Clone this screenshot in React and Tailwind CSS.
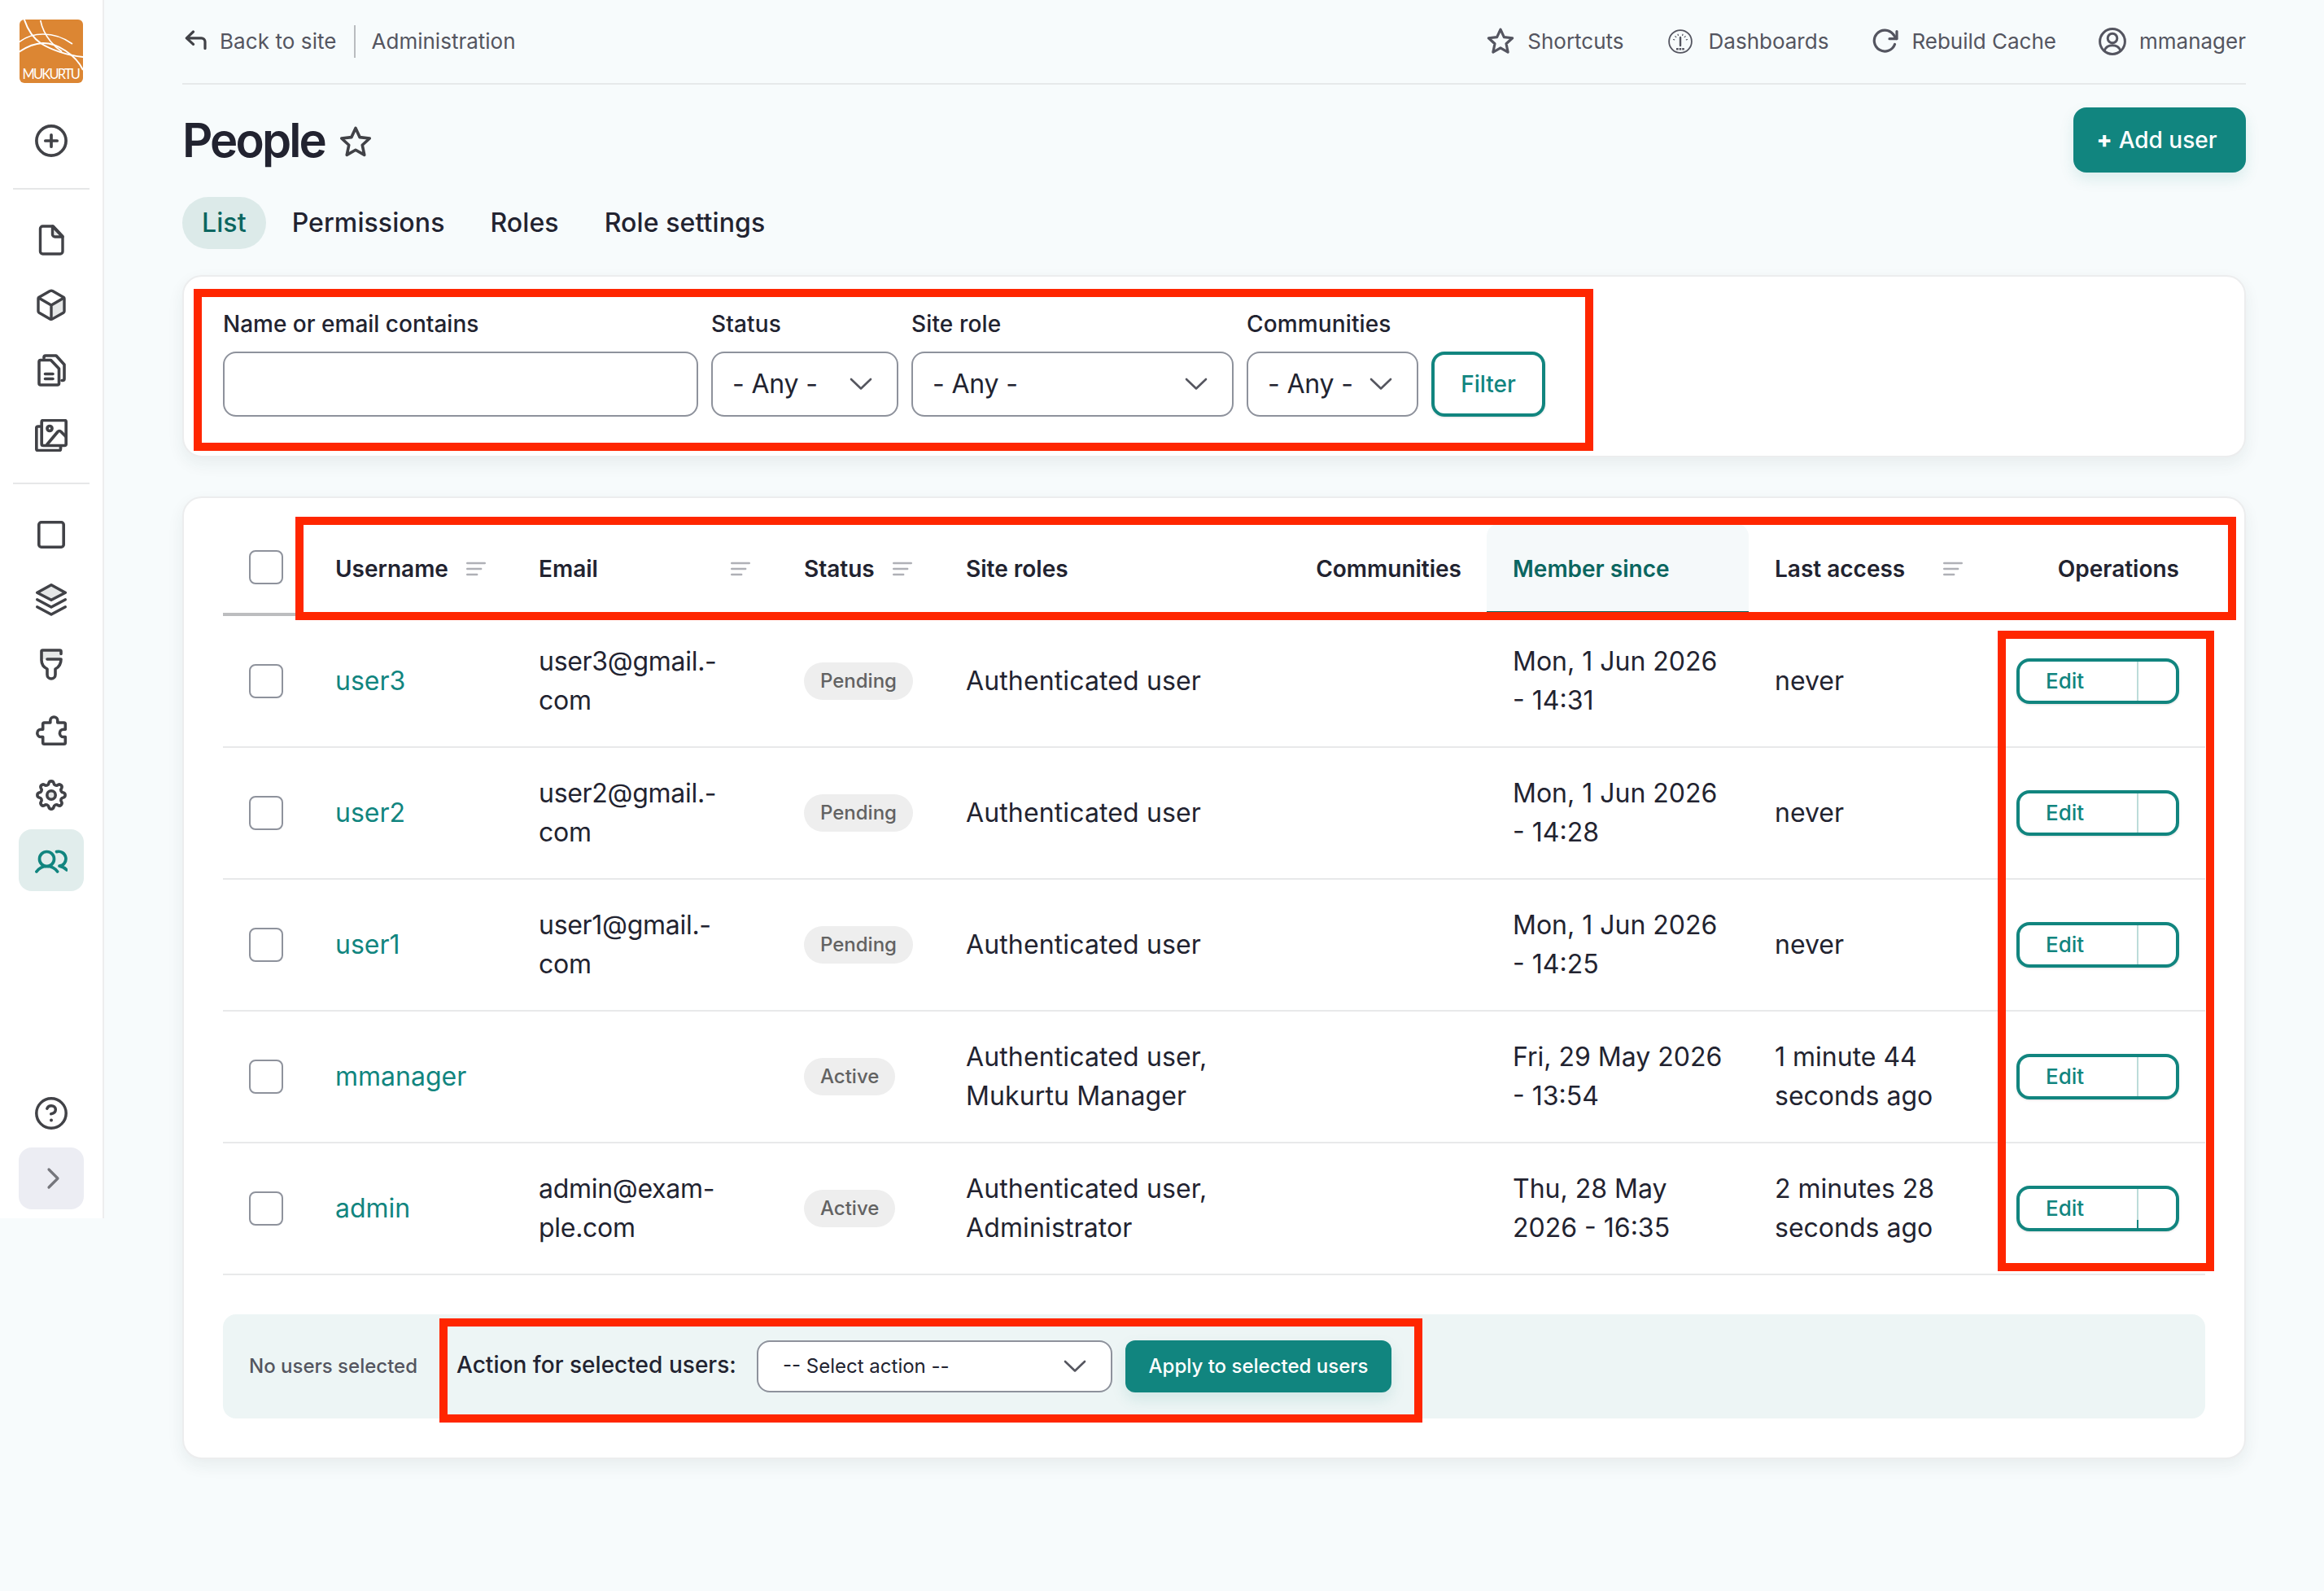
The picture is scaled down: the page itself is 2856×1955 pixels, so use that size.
import { useState } from "react";

// Shared wrapper for the 40px line icons
const Icon = ({ children, className = "", size = 40, box = 40, sw = 3.7 }) => (
  <svg
    width={size}
    height={size}
    viewBox={`0 0 ${box} ${box}`}
    fill="none"
    stroke="currentColor"
    strokeWidth={sw}
    strokeLinecap="round"
    strokeLinejoin="round"
    className={`shrink-0 ${className}`}
  >
    {children}
  </svg>
);

// Eight round lobes around the centre
const gearPath = () => {
  const pt = (deg) => {
    const a = (deg * Math.PI) / 180;
    return `${(20 + 15.2 * Math.sin(a)).toFixed(2)} ${(20 - 15.2 * Math.cos(a)).toFixed(2)}`;
  };
  let d = `M${pt(-11.25)}`;
  for (let k = 0; k < 8; k++) {
    d += `A3.1 3.1 0 0 1 ${pt(k * 45 + 11.25)}A3.3 3.3 0 0 0 ${pt(k * 45 + 33.75)}`;
  }
  return d + "z";
};

const PlusIcon = () => (
  <Icon>
    <circle cx="20" cy="20" r="18.1" />
    <path d="M20 12.8v14.4M12.8 20h14.4" />
  </Icon>
);

const FileIcon = () => (
  <Icon sw={3.4}>
    <path d="M21.5 3v10a3 3 0 0 0 3 3H34z" fill="#e5e7e7" />
    <path d="M9.5 3h12.8L34 15.5V34a3 3 0 0 1-3 3H9.5a3 3 0 0 1-3-3V6a3 3 0 0 1 3-3z" />
  </Icon>
);

const CubeIcon = () => (
  <Icon sw={3.4}>
    <path d="M20 20v17.5l16-9v-17z" fill="#e5e7e7" stroke="none" />
    <path d="M18.5 2.6 5 10.2a2 2 0 0 0-1 1.8v15.5a2 2 0 0 0 1 1.8l13.5 7.6a3 3 0 0 0 3 0L35 29.3a2 2 0 0 0 1-1.8V12a2 2 0 0 0-1-1.8L21.5 2.6a3 3 0 0 0-3 0z" />
    <path d="M4.5 11 20 20l15.5-9M20 20v17" />
  </Icon>
);

const DocsIcon = () => (
  <Icon sw={3.6}>
    <path d="M5 9.5a2 2 0 0 1 2-2h12.5l10 10.5V36a2 2 0 0 1-2 2H7a2 2 0 0 1-2-2z" />
    <path d="M11 5V4a2 2 0 0 1 2-2h13L36 13v17.5a2 2 0 0 1-2 2h-1" />
    <path d="M12.5 24.5h9.5M12.5 30.5h9.5" />
  </Icon>
);

const ImageIcon = () => (
  <Icon sw={3.7}>
    <rect x="8.2" y="1.5" width="30" height="31" rx="2" />
    <circle cx="18" cy="11.5" r="3" />
    <path d="m15 31 13-15.5a2.5 2.5 0 0 1 4 0l6 6M6 9H3.8a2 2 0 0 0-2 2v25.5a2 2 0 0 0 2 2h25.7a2 2 0 0 0 2-2V34" />
  </Icon>
);

const SquareIcon = () => (
  <Icon sw={3.6}>
    <rect x="4.8" y="4.8" width="30.4" height="30.4" rx="3" />
  </Icon>
);

const LayersIcon = () => (
  <Icon sw={3.5}>
    <path d="m20 1.8 17.3 9.4L20 20.2 2.7 11.2z" fill="#e5e7e7" />
    <path d="M2.7 19.8 20 29l17.3-9.2M2.7 28.8 20 38l17.3-9.2" />
  </Icon>
);

const BrushIcon = () => (
  <Icon sw={3.6}>
    <path d="M9 3h22v10H9z" fill="#e5e7e7" stroke="none" />
    <path d="M32 6.5V3.5A1.5 1.5 0 0 0 30.5 2h-21A1.5 1.5 0 0 0 8 3.5V14c0 5 2.5 8.8 7 11v7a5 5 0 0 0 10 0v-7c4.5-2.2 7-6 7-12H15" />
  </Icon>
);

const PuzzleIcon = () => (
  <Icon sw={3.6}>
    <path d="M11.5 11h7.3V8.5a4.5 4.5 0 0 1 9 0V11h7.7a1.8 1.8 0 0 1 1.8 1.8v6.5H35a4.6 4.6 0 0 0 0 9.2h2.3v7a1.8 1.8 0 0 1-1.8 1.8h-24a1.8 1.8 0 0 1-1.8-1.8v-7H7.4a4.6 4.6 0 0 1 0-9.2h2.3v-6.5a1.8 1.8 0 0 1 1.8-1.8z" />
  </Icon>
);

const GearIcon = () => (
  <Icon sw={3.6}>
    <path d={gearPath()} />
    <circle cx="20" cy="20" r="5.2" fill="#e5e7e7" />
  </Icon>
);

const PeopleIcon = () => (
  <Icon sw={3.7}>
    <circle cx="14.5" cy="18.5" r="9" />
    <path d="M1.9 34c3-4 7.3-6.5 12.6-6.5S24.8 30 27.6 34" />
    <path d="M26.5 9.6A9 9 0 1 1 30 27.2c3.5.5 6.5 2.2 9 4.8" />
  </Icon>
);

const HelpIcon = () => (
  <Icon sw={3.5}>
    <circle cx="20" cy="20" r="18.2" />
    <path d="M14.8 14.2c1-2.3 3-3.4 5.2-3.4 3.2 0 5.3 2 5.3 4.7 0 3-2.3 4.7-5.6 5.2" />
    <circle cx="20" cy="28.5" r="2" fill="currentColor" stroke="none" />
  </Icon>
);

const Star = ({ size = 32, className = "", sw = 3 }) => (
  <Icon size={size} box={32} sw={sw} className={className}>
    <path d="m16 2 4.1 8.9 9.7 1.1-7.2 6.6 2 9.7-8.6-4.9-8.6 4.9 2-9.7L2.2 12l9.7-1.1z" />
  </Icon>
);

const Gauge = () => (
  <Icon size={30} box={30} sw={1.8}>
    <circle cx="15" cy="15" r="13.9" />
    <path d="M15 10v10" strokeWidth="2.4" />
    <path d="M6.5 12.5l1.2.4M8.8 8.6l1 1M12 6.2l.4 1.3M18 6.2l-.4 1.3M21.2 8.6l-1 1M23.5 12.5l-1.2.4" strokeWidth="1.2" />
    <path d="M10 24.3h10" strokeWidth="2.4" strokeDasharray="2.6 1" strokeLinecap="butt" />
  </Icon>
);

const Refresh = () => (
  <Icon size={32} box={32} sw={3.2}>
    <path d="M27.5 19.5A13 13 0 1 1 25.5 7l4 5.5" />
    <path d="M30 3.5v9.2h-9" />
  </Icon>
);

const UserCircle = () => (
  <Icon size={34} box={34} sw={3}>
    <circle cx="17" cy="17" r="15.4" />
    <circle cx="17" cy="13" r="5.8" />
    <path d="M7 28c2-4.5 5.5-6.3 10-6.3S25 23.5 27 28" />
  </Icon>
);

const Chevron = () => (
  <svg width="28" height="16" viewBox="0 0 28 16" fill="none" stroke="#55565f" strokeWidth="2.6" strokeLinecap="round" strokeLinejoin="round" className="shrink-0">
    <path d="m2 2 12 11.5L26 2" />
  </svg>
);

const SortIcon = () => (
  <svg width="24" height="18" viewBox="0 0 24 18" stroke="#afb0b6" strokeWidth="2.4" strokeLinecap="round" className="shrink-0">
    <path d="M1.2 2h21.6M1.2 9h17M1.2 16h12" />
  </svg>
);

const Logo = () => (
  <svg width="78" height="78" viewBox="0 0 78 78" fill="none" stroke="#fff" className="shrink-0">
    <defs>
      <clipPath id="logo">
        <rect width="78" height="78" rx="6" />
      </clipPath>
    </defs>
    <g clipPath="url(#logo)">
      <rect width="78" height="78" fill="#dc8633" stroke="none" />
      <path d="M5.5-1C10 13 17 23 26.5 29.5 37 36 58 44.5 79 46" strokeWidth="2" />
      <path d="M25.7 1c2 10 6 18 12.5 26 5 6 10 10 14 12.5" strokeWidth="1.6" />
      <path d="M-1 28C8 21 18 18 29 18c13 0 25 4 36 12" strokeWidth="1.6" />
      <path d="M-1 40c9-6 19-10.5 29-11 18-.5 41 14 50 33" strokeWidth="1.9" />
      <text x="3.5" y="73.2" textLength="71.5" fontSize="16.5" fill="#fff" stroke="none" fontFamily="Lato, Open Sans, sans-serif">
        MUKURTU
      </text>
    </g>
  </svg>
);

const NavItem = ({ children, active }) => (
  <a
    className={`flex h-[76px] w-20 items-center justify-center rounded-2xl ${
      active ? "bg-[#e1edec] text-[#11857f]" : "text-[#414247]"
    }`}
  >
    {children}
  </a>
);

const Sidebar = () => (
  <aside className="flex h-[1497px] w-32 shrink-0 flex-col items-center border-r-2 border-[#ededee] bg-white pt-6 pb-[11px]">
    <Logo />
    <div className="mt-[33px]">
      <NavItem><PlusIcon /></NavItem>
    </div>
    <div className="mt-5 h-0.5 w-[94px] bg-[#e6e7e8]" />
    <nav className="mt-6 flex flex-col gap-1">
      <NavItem><FileIcon /></NavItem>
      <NavItem><CubeIcon /></NavItem>
      <NavItem><DocsIcon /></NavItem>
      <NavItem><ImageIcon /></NavItem>
    </nav>
    <div className="mt-5 h-0.5 w-[94px] bg-[#e6e7e8]" />
    <nav className="mt-6 flex flex-col gap-1">
      <NavItem><SquareIcon /></NavItem>
      <NavItem><LayersIcon /></NavItem>
      <NavItem><BrushIcon /></NavItem>
      <NavItem><PuzzleIcon /></NavItem>
      <NavItem><GearIcon /></NavItem>
      <NavItem active><PeopleIcon /></NavItem>
    </nav>
    <div className="mt-auto flex flex-col gap-1">
      <NavItem><HelpIcon /></NavItem>
      <button className="flex h-[76px] w-20 items-center justify-center rounded-2xl bg-[#ecedf3] text-[#75767c]">
        <Icon sw={3.2}>
          <path d="m17 9 11 11-11 11" />
        </Icon>
      </button>
    </div>
  </aside>
);

const Select = ({ label, value, width }) => (
  <div className={`flex flex-col ${width}`}>
    <label className="h-[52px] text-[28px] leading-9 font-medium tracking-[0.005em]">{label}</label>
    <div className="flex h-20 items-center justify-between rounded-2xl border-2 border-[#8e929c] bg-white pr-[30px] pl-6 text-[32px]">
      <span className="tracking-[-0.005em]">{value}</span>
      <Chevron />
    </div>
  </div>
);

const Checkbox = () => <span className="block size-[42px] rounded-lg border-2 border-[#8e929c] bg-white" />;

const COLS = "grid grid-cols-[107px_250px_325px_200px_429px_242px_322px_297px_264px]";

const users = [
  { name: "user3", email: ["user3@gmail.-", "com"], status: "Pending", roles: ["Authenticated user"], since: ["Mon, 1 Jun 2026", "- 14:31"], access: ["never"] },
  { name: "user2", email: ["user2@gmail.-", "com"], status: "Pending", roles: ["Authenticated user"], since: ["Mon, 1 Jun 2026", "- 14:28"], access: ["never"] },
  { name: "user1", email: ["user1@gmail.-", "com"], status: "Pending", roles: ["Authenticated user"], since: ["Mon, 1 Jun 2026", "- 14:25"], access: ["never"] },
  { name: "mmanager", email: [], status: "Active", roles: ["Authenticated user,", "Mukurtu Manager"], since: ["Fri, 29 May 2026", "- 13:54"], access: ["1 minute 44", "seconds ago"] },
  { name: "admin", email: ["admin@exam-", "ple.com"], status: "Active", roles: ["Authenticated user,", "Administrator"], since: ["Thu, 28 May", "2026 - 16:35"], access: ["2 minutes 28", "seconds ago"] },
];

const Lines = ({ items, className = "pl-8" }) => (
  <div className={`whitespace-nowrap ${className}`}>
    {items.map((line) => (
      <div key={line}>{line}</div>
    ))}
  </div>
);

// Red outline drawn on top of a section
const Highlight = ({ className }) => (
  <div className={`pointer-events-none absolute border-[10px] border-[#ff2600] ${className}`} />
);

const App = () => {
  const [tab, setTab] = useState("List");

  return (
    <div className="relative flex min-h-[1955px] w-[2856px] items-start bg-[#f7fbfc] font-['Inter',sans-serif] text-[#222330]">
      <Sidebar />

      <main className="ml-24 flex w-[2536px] flex-col">
        {/* Top bar */}
        <header className="flex h-[104px] items-center justify-between border-b-2 border-[#e6e9ea] pb-px text-[26px] text-[#545560]">
          <div className="flex items-center">
            <svg width="28" height="24" viewBox="0 0 28 24" fill="none" stroke="#414247" strokeWidth="3.2" strokeLinecap="round" strokeLinejoin="round" className="-mt-1 ml-[3px]">
              <path d="M10.5 2 2.3 9.8l8.2 7.6M3 9.8h17.5a4.5 4.5 0 0 1 4.5 4.5V22.5" />
            </svg>
            <span className="ml-[15px] tracking-[0.003em]">Back to site</span>
            <span className="mr-5 ml-[21px] h-10 w-0.5 bg-[#b9bcbf]" />
            <span>Administration</span>
          </div>
          <div className="flex items-center">
            <Star size={34} className="mr-4" />
            <span className="mr-[54px]">Shortcuts</span>
            <Gauge />
            <span className="mr-[54px] ml-5">Dashboards</span>
            <Refresh />
            <span className="mr-[52px] ml-4">Rebuild Cache</span>
            <UserCircle />
            <span className="ml-4">mmanager</span>
          </div>
        </header>

        {/* Title */}
        <div className="mt-7 flex h-20 items-center justify-between">
          <div className="flex items-center">
            <h1 className="text-[58px] font-semibold tracking-[-0.05em]">People</h1>
            <Star size={40} sw={2.9} className="mt-[5px] ml-[18px] text-[#414247]" />
          </div>
          <button className="flex h-20 w-[212px] items-center justify-center rounded-2xl bg-[#11857f] pr-[7px] text-[28px] font-medium text-white shadow-[0_8px_18px_rgba(17,133,127,0.12)]">
            <span className="mr-2 font-extrabold">+</span>Add user
          </button>
        </div>

        {/* Tabs */}
        <div className="mt-[30px] flex gap-2 text-[32px] font-medium tracking-[0.003em]">
          {["List", "Permissions", "Roles", "Role settings"].map((t) => (
            <button
              key={t}
              onClick={() => setTab(t)}
              className={`h-16 rounded-full px-6 ${t === tab ? "bg-[#dceae9] text-[#0b6660]" : ""}`}
            >
              {t}
            </button>
          ))}
        </div>

        {/* Filters */}
        <section className="mt-8 flex h-[224px] items-start gap-4 rounded-3xl border-2 border-[#ecedee] bg-white px-12 pt-10 shadow-[0_8px_20px_rgba(30,50,60,0.07)]">
          <div className="flex w-[584px] flex-col">
            <label className="h-[52px] text-[28px] leading-9 font-medium">Name or email contains</label>
            <input type="text" className="h-20 rounded-2xl border-2 border-[#8e929c] bg-white" />
          </div>
          <Select label="Status" value="- Any -" width="w-[230px]" />
          <Select label="Site role" value="- Any -" width="w-[396px]" />
          <Select label="Communities" value="- Any -" width="w-[211px]" />
          <button className="mt-[52px] h-20 w-[140px] rounded-2xl border-4 border-[#11857f] text-[28px] font-medium text-[#11857f] shadow-sm">
            Filter
          </button>
        </section>

        {/* User table */}
        <section className="mt-12 flex h-[1183px] flex-col rounded-3xl border-2 border-[#ecedee] bg-white px-12 pt-[31px] shadow-[0_8px_20px_rgba(30,50,60,0.07)]">
          <div className={`${COLS} h-[114px] text-[28px] font-semibold whitespace-nowrap`}>
            <div className="flex items-center border-b-4 border-[#bcbdbf] pb-[3px] pl-8"><Checkbox /></div>
            <div className="flex items-center gap-[22px] border-b-4 border-[#bcbdbf] pt-0.5 pl-[31px]">Username <SortIcon /></div>
            <div className="flex items-center justify-between border-b-4 border-[#bcbdbf] pt-0.5 pr-[34px] pl-[31px]">Email <SortIcon /></div>
            <div className="flex items-center gap-[22px] border-b-4 border-[#bcbdbf] pt-0.5 pl-8">Status <SortIcon /></div>
            <div className="flex items-center border-b-4 border-[#bcbdbf] pt-0.5 pl-[31px]">Site roles</div>
            <div className="flex items-center justify-end border-b-4 border-[#bcbdbf] pt-0.5 pr-[31px]">Communities</div>
            <div className="flex items-center rounded-t-2xl border-b-[6px] border-[#0b6660] bg-[#f5f9fa] pt-1 pl-8 text-[#0b6660]">Member since</div>
            <div className="flex items-center justify-between border-b-4 border-[#bcbdbf] pt-0.5 pr-[34px] pl-8">Last access <SortIcon /></div>
            <div className="flex items-center justify-end border-b-4 border-[#bcbdbf] pt-0.5 pr-8">Operations</div>
          </div>

          {users.map((u) => (
            <div key={u.name} className={`${COLS} h-[162px] items-center border-b-2 border-[#e8e9ea] text-[32px] leading-[48px]`}>
              <div className="pl-8"><Checkbox /></div>
              <a className="pl-[31px] text-[#11857f]">{u.name}</a>
              <Lines items={u.email} className="pl-[31px] tracking-[-0.009em]" />
              <div className="flex pl-8">
                <span className="flex h-[46px] items-center rounded-full bg-[#eeeeee] px-5 text-[24px] font-medium text-[#626262]">
                  {u.status}
                </span>
              </div>
              <Lines items={u.roles} className="pl-[31px] tracking-[0.004em]" />
              <div />
              <Lines items={u.since} />
              <Lines items={u.access} />
              <div className="flex justify-end pr-8">
                <div className="flex h-14 w-[200px] rounded-2xl border-4 border-[#11857f] text-[26px] font-medium text-[#11857f] shadow-sm">
                  <span className="flex w-[146px] items-center border-r-2 border-[#bcdcd9] pl-8">Edit</span>
                  {u.name === "admin" && <span className="-ml-0.5 h-2.5 w-0.5 self-end bg-[#11857f]" />}
                </div>
              </div>
            </div>
          ))}

          {/* Bulk actions */}
          <div className="mt-12 flex h-32 items-center rounded-2xl bg-[#edf5f5] pl-8 whitespace-nowrap">
            <span className="w-[255px] text-[24px] font-medium text-[#545560]">No users selected</span>
            <span className="w-[369px] pb-1 text-[28px] font-medium tracking-[0.001em]">Action for selected users:</span>
            <div className="flex h-16 w-[437px] items-center justify-between rounded-2xl border-2 border-[#8e929c] bg-white px-[30px] text-[24px]">
              -- Select action --
              <Chevron />
            </div>
            <button className="ml-4 h-16 w-[327px] rounded-xl bg-[#11857f] text-[24px] font-medium text-white shadow-[0_8px_18px_rgba(17,133,127,0.12)]">
              Apply to selected users
            </button>
          </div>
        </section>
      </main>

      <Highlight className="top-[355px] left-[238px] h-[199px] w-[1720px]" />
      <Highlight className="top-[635px] left-[363px] h-[127px] w-[2385px]" />
      <Highlight className="top-[775px] left-[2455px] h-[787px] w-[266px]" />
      <Highlight className="top-[1620px] left-[540px] h-32 w-[1208px]" />
    </div>
  );
};

export default App;
